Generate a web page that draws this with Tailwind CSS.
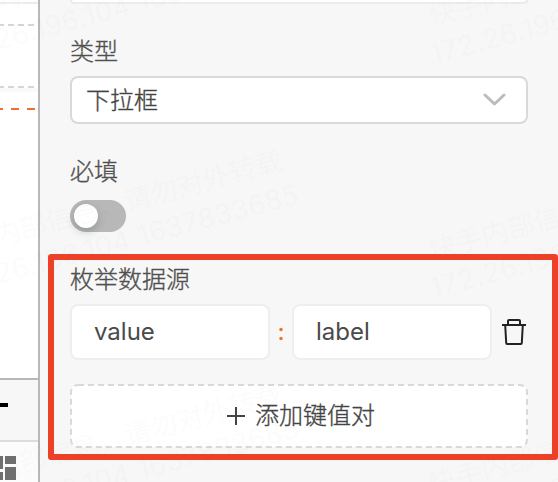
<!DOCTYPE html>
<html lang="zh-CN">
<head>
<meta charset="utf-8">
<title>表单配置</title>
<script src="https://cdn.jsdelivr.net/npm/@tailwindcss/browser@4"></script>
</head>
<body class="w-[558px] h-[482px] overflow-hidden bg-[#f7f7f7] font-['Inter','Noto_Sans_CJK_SC',sans-serif] text-[24px] leading-[36px] font-light text-[#505050]">
<div class="relative flex w-[558px] h-[482px] overflow-hidden">
  <!-- canvas edge -->
  <aside class="flex w-10 shrink-0 flex-col border-r-2 border-[#b8b8b8] bg-white">
    <div class="h-[378px]">
      <svg width="38" height="378" fill="none" stroke-width="2">
        <rect y="88" width="38" height="4" fill="#fafafa"/>
        <path d="M0 3H38" stroke="#eee"/>
        <path d="M0 25H35M0 87H38" stroke="#d6d6d6" stroke-dasharray="6 4" stroke-dashoffset="2"/>
        <path d="M0 109H35" stroke="#ed6f2d" stroke-dasharray="8 8" stroke-dashoffset="5"/>
      </svg>
    </div>
    <div class="h-16 shrink-0 border-t-2 border-b-2 border-t-[#b8b8b8] border-b-[#ddd] bg-[#f7f7f7] pt-[23px]">
      <div class="h-1 w-2 bg-black"></div>
    </div>
    <div class="h-10 shrink-0 bg-[#fcfcfc] pt-[14px]">
      <svg width="16" height="24" fill="#707070"><path d="M0 0h3v13H0zM5 0h11v8H5zM0 16h3v8H0zM5 11h11v13H5z"/></svg>
    </div>
  </aside>

  <!-- property panel -->
  <main class="flex w-[488px] flex-col pl-[30px] [-webkit-text-stroke:0.35px_currentColor]">
    <div class="h-1 shrink-0 rounded-b-lg border-x-2 border-b-2 border-[#ececec] bg-white"></div>
    <label class="mt-[30px] h-9">类型</label>
    <div class="mt-[6px] flex h-12 items-center justify-between rounded-lg border-2 border-[#d9d9d9] bg-white pl-[14px] pr-5 text-[#444]">
      <span class="pt-px">下拉框</span>
      <svg width="24" height="14" fill="none" stroke="#bcbcbc" stroke-width="3" stroke-linecap="round" stroke-linejoin="round"><path d="M3 2L12.500 11L22 2"/></svg>
    </div>
    <label class="mt-[30px] h-9">必填</label>
    <div class="mt-[10px] h-8 w-14 rounded-full bg-[#b8b8b8] p-1">
      <div class="size-6 rounded-full bg-white shadow-[0_4px_8px_rgba(0,35,11,0.2)]"></div>
    </div>
    <label class="mt-[30px] h-9">枚举数据源</label>
    <div class="mt-[6px] flex h-14 items-center font-normal text-[#4a4a4a] [-webkit-text-stroke:0]">
      <div class="flex h-14 w-[200px] items-center rounded-lg border-2 border-[#eee] bg-white pl-[22px]">value</div>
      <svg class="w-[22px]" width="22" height="20" fill="#f0702e"><circle cx="11" cy="7.500" r="1.700"/><circle cx="11" cy="16.500" r="1.700"/></svg>
      <div class="flex h-14 w-[200px] items-center rounded-lg border-2 border-[#eee] bg-white pl-[22px]">label</div>
      <svg class="ml-[10px] shrink-0" width="24" height="26" fill="none" stroke="#222" stroke-width="2" stroke-linejoin="round"><path d="M0 6H24M6 6V2Q6 1 7 1H17Q18 1 18 2V6M3.200 6L4.200 24Q4.300 25 5 25H19Q19.700 25 19.800 24L20.800 6"/></svg>
    </div>
    <button class="relative mt-6 flex h-16 items-center justify-center pl-[3px] text-[#444]">
      <svg class="absolute inset-0" width="458" height="64"><rect x="1" y="1" width="456" height="62" rx="7" fill="#fff" stroke="#d9d9d9" stroke-width="2" stroke-dasharray="6 4"/></svg>
      <svg class="relative mr-[9px]" width="20" height="20" stroke="#444" stroke-width="2"><path d="M1 10H19M10 1V19"/></svg>
      <span class="relative">添加键值对</span>
    </button>
  </main>

  <!-- page watermark -->
  <svg class="pointer-events-none absolute inset-0 opacity-[0.012] font-light" width="558" height="482" fill="#000" font-size="27">
    <defs>
      <g id="mark" transform="rotate(-15)">
        <text x="0" y="0" textLength="352" lengthAdjust="spacing">快手内部信息，请勿对外转载</text>
        <text x="-8" y="37" textLength="367" lengthAdjust="spacing">172.26.196.104 1637833685</text>
      </g>
    </defs>
    <use href="#mark" x="-56" y="26"/><use href="#mark" x="432" y="26"/>
    <use href="#mark" x="-56" y="260"/><use href="#mark" x="432" y="260"/>
    <use href="#mark" x="-56" y="494"/><use href="#mark" x="432" y="494"/>
  </svg>

  <!-- highlight frame -->
  <div class="pointer-events-none absolute left-12 top-[254px] h-[206px] w-[510px] rounded-[3px] border-[6px] border-[#ed4127]"></div>
</div>
</body>
</html>
